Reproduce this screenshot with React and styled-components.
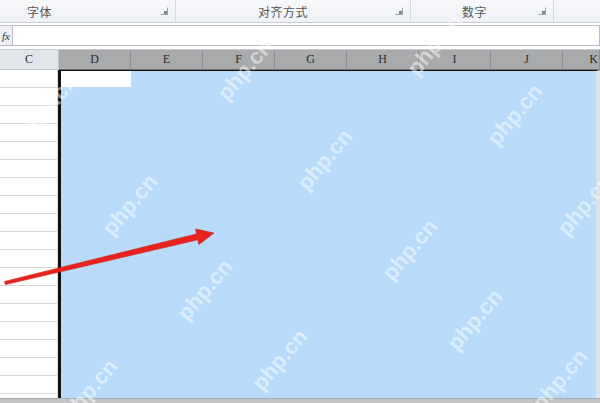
import React from 'react';
import styled, { createGlobalStyle } from 'styled-components';

const GlobalStyle = createGlobalStyle`
  html, body {
    margin: 0;
    padding: 0;
    background: #ffffff;
    overflow: hidden;
  }
`;

const Sheet = styled.div`
  position: relative;
  width: 600px;
  height: 403px;
  display: flex;
  flex-direction: column;
  overflow: hidden;
  font-family: "Noto Sans CJK SC", "Liberation Sans", sans-serif;
  background: #ffffff;
`;

const Ribbon = styled.div`
  height: 22px;
  display: flex;
  background: linear-gradient(#f7f8fa, #eef1f5);
  border-bottom: 1px solid #c9ccd1;
`;

const Group = styled.div`
  width: ${(p) => p.w}px;
  display: flex;
  align-items: center;
  padding-left: ${(p) => p.pad}px;
  padding-right: 7px;
  box-sizing: border-box;
  border-right: 1px solid #d6d9de;
  font-size: 12px;
  color: #555555;
  &:last-child {
    border-right: none;
  }
`;

const GroupLabel = styled.span`
  flex: 1;
  letter-spacing: 0.5px;
`;

const Launcher = styled.span`
  width: 6px;
  height: 6px;
  border: 1px solid #9aa3ad;
  border-top-color: transparent;
  border-left-color: transparent;
  position: relative;
  &::after {
    content: '';
    position: absolute;
    right: 0;
    bottom: 0;
    width: 3px;
    height: 3px;
    background: #7c8794;
  }
`;

const FormulaBar = styled.div`
  margin-top: 2px;
  height: 21px;
  display: flex;
`;

const FxBox = styled.div`
  width: 12px;
  display: flex;
  align-items: center;
  justify-content: center;
  background: #eef0f3;
  border: 1px solid #b9bdc3;
  border-left: none;
  font-family: "Liberation Serif", serif;
  font-style: italic;
  font-size: 11px;
  color: #333;
`;

const FormulaInput = styled.div`
  flex: 1;
  border: 1px solid #b9bdc3;
  border-left: none;
  background: #ffffff;
`;

const HeaderRow = styled.div`
  margin-top: 3px;
  height: 20px;
  display: flex;
  border-top: 1px solid #c4c8cd;
`;

const HeaderCell = styled.div`
  width: ${(p) => p.w}px;
  flex-shrink: 0;
  box-sizing: border-box;
  display: flex;
  align-items: center;
  justify-content: ${(p) => (p.edge ? 'flex-end' : 'center')};
  font-family: "Liberation Serif", serif;
  font-size: 12px;
  color: #2a2a2a;
  background: ${(p) => (p.selected ? '#a9aaac' : '#e2e5ea')};
  border-right: 1px solid ${(p) => (p.selected ? '#8b8d90' : '#c3c7cd')};
  border-bottom: 1px solid ${(p) => (p.selected ? '#6f7174' : '#c3c7cd')};
  padding-right: ${(p) => (p.edge ? 1 : 0)}px;
`;

const Body = styled.div`
  flex: 1;
  display: flex;
  min-height: 0;
`;

const LeftColumn = styled.div`
  width: 57px;
  flex-shrink: 0;
  border-right: 1px solid #dcdcdc;
  display: flex;
  flex-direction: column;
`;

const GridRow = styled.div`
  height: 17px;
  flex-shrink: 0;
  border-bottom: 1px solid #d9d9d9;
`;

const Selection = styled.div`
  flex: 1;
  background: #b9dbf9;
  border-left: 3px solid #111111;
  border-top: 1px solid #111111;
  display: flex;
  flex-direction: column;
  border-right: 4px solid #dfe3e8;
`;

const ActiveCell = styled.div`
  width: 70px;
  height: 16px;
  background: #ffffff;
`;

const BottomBar = styled.div`
  height: 4px;
  background: #c2c3c5;
  border-top: 1px solid #a9abae;
`;

const Overlay = styled.svg`
  position: absolute;
  left: 0;
  top: 0;
  pointer-events: none;
`;

const Watermark = styled.span`
  position: absolute;
  transform: translate(-50%, -50%) rotate(-50deg);
  font-family: "Liberation Sans", Arial, sans-serif;
  font-weight: bold;
  font-size: 22px;
  color: rgba(255, 255, 255, 0.5);
  white-space: nowrap;
  pointer-events: none;
`;

const columns = ['D', 'E', 'F', 'G', 'H', 'I', 'J'];

const marks = [
  [50, 105], [245, 70], [435, 45], [130, 205], [325, 160], [515, 115],
  [205, 290], [410, 250], [585, 205], [90, 390], [280, 360],
  [475, 320], [560, 380],
];

export default function App() {
  const rows = Array.from({ length: 19 });
  return (
    <>
      <GlobalStyle />
      <Sheet>
        <Ribbon>
          <Group w={176} pad={27}>
            <GroupLabel>字体</GroupLabel>
            <Launcher />
          </Group>
          <Group w={235} pad={82}>
            <GroupLabel>对齐方式</GroupLabel>
            <Launcher />
          </Group>
          <Group w={143} pad={51}>
            <GroupLabel>数字</GroupLabel>
            <Launcher />
          </Group>
          <Group w={46} pad={0} />
        </Ribbon>

        <FormulaBar>
          <FxBox>fx</FxBox>
          <FormulaInput />
        </FormulaBar>

        <HeaderRow>
          <HeaderCell w={59}>C</HeaderCell>
          {columns.map((name) => (
            <HeaderCell key={name} w={72} selected>
              {name}
            </HeaderCell>
          ))}
          <HeaderCell w={37} selected edge>K</HeaderCell>
        </HeaderRow>

        <Body>
          <LeftColumn>
            {rows.map((_, i) => (
              <GridRow key={i} />
            ))}
          </LeftColumn>
          <Selection>
            <ActiveCell />
          </Selection>
        </Body>
        <BottomBar />

        {marks.map(([x, y], i) => (
          <Watermark key={i} style={{ left: x, top: y }}>php.cn</Watermark>
        ))}

        <Overlay width="600" height="403" viewBox="0 0 600 403">
          <polygon
            points="5,283 5.4,284.6 197.8,239.8 198.9,244.6 214,233 195.6,229 196.5,233.9 4.6,281.4"
            fill="#e8231c"
            stroke="#d01a14"
            strokeWidth="0.6"
            strokeLinejoin="round"
          />
        </Overlay>
      </Sheet>
    </>
  );
}
